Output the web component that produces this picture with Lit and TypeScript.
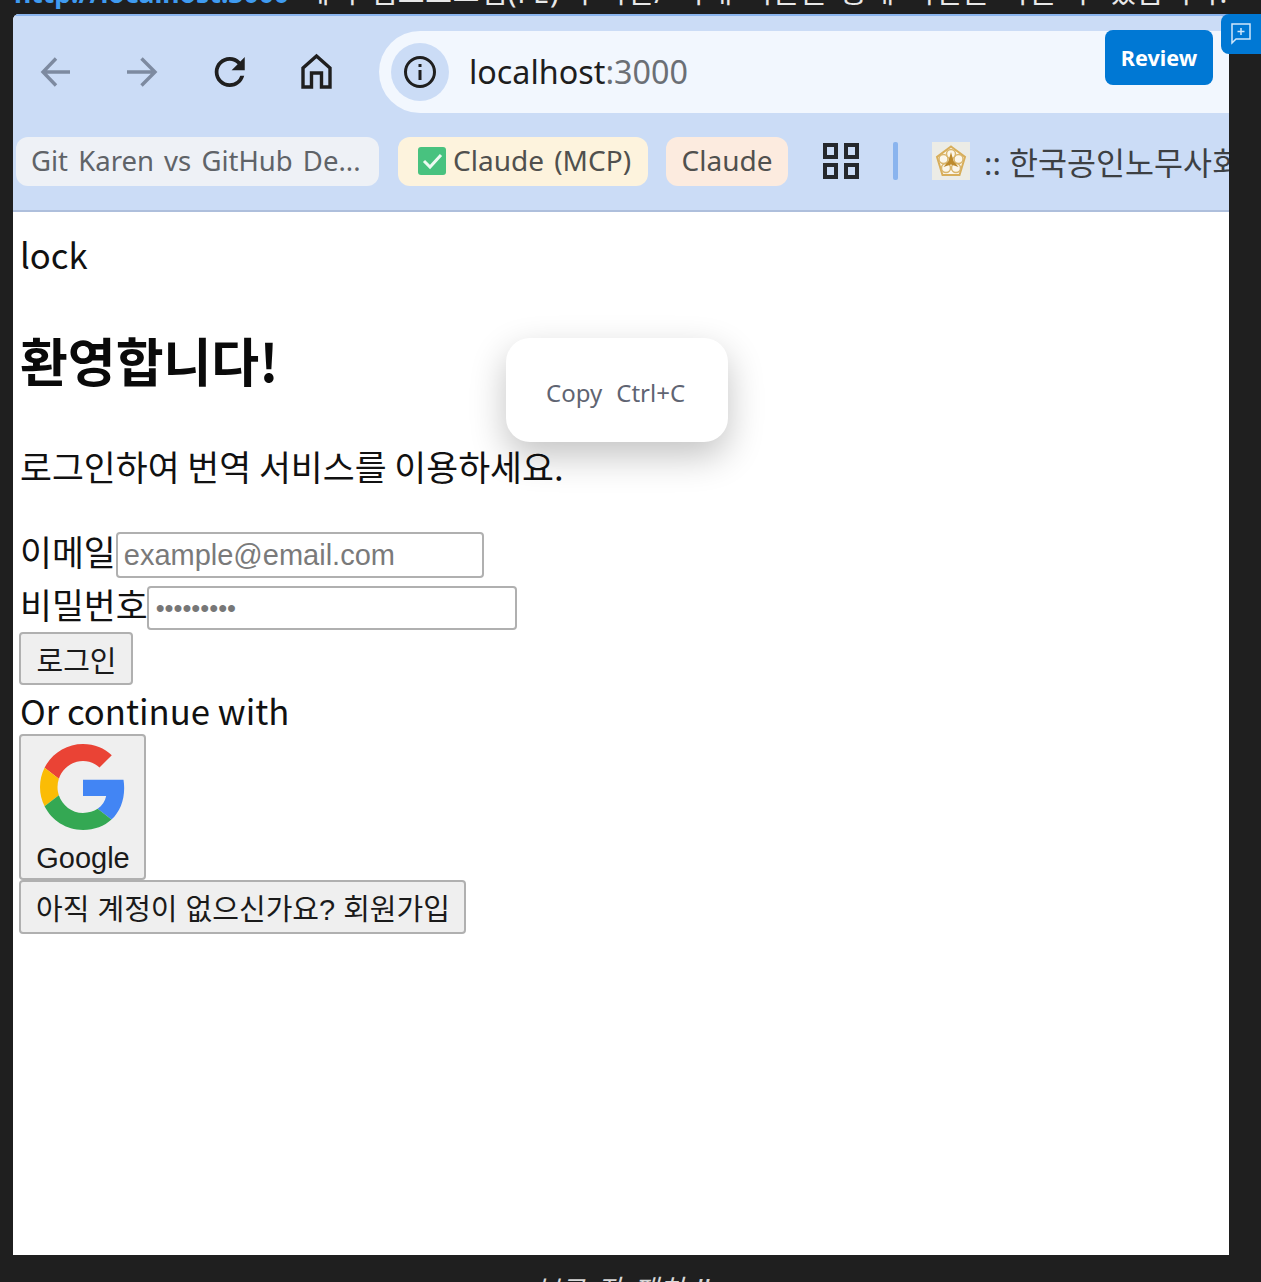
import { LitElement, html, css } from "lit";
import { customElement } from "lit/decorators.js";

@customElement("app-root")
export class AppRoot extends LitElement {
  static styles = css`
    :host {
      display: block;
      position: relative;
      width: 1261px;
      height: 1282px;
      overflow: hidden;
      background: #1f1f1f;
      font-family: "Noto Sans", "Noto Sans CJK KR", sans-serif;
      color: #111;
    }
    .caption {
      height: 14px;
      overflow: hidden;
      padding-left: 14px;
      white-space: nowrap;
      color: #e8e8e8;
      font-size: 29px;
      line-height: 30px;
      word-spacing: 4px;
      letter-spacing: 0.8px;
    }
    .caption span { display: block; margin-top: -23px; }
    .caption b { color: #3f9bf0; font-weight: 700; font-size: 26.500px; margin-right: 14px; word-spacing: 0; letter-spacing: 0; }
    .window {
      width: 1216px;
      margin-left: 13px;
      height: 1241px;
      background: #fff;
      display: flex;
      flex-direction: column;
      overflow: hidden;
      border-radius: 6px 0 0 0;
    }
    .chrome {
      height: 198px;
      flex: none;
      box-sizing: border-box;
      background: #cbdcf6;
      border-top: 2px solid #8ab4ee;
      border-bottom: 2px solid #aebfdc;
      padding-top: 15px;
    }
    .nav { display: flex; align-items: center; height: 82px; }
    .nav svg { flex: none; display: block; }
    .navbtns { display: flex; align-items: center; width: 366px; flex: none; padding-left: 23px; gap: 47px; box-sizing: border-box; }
    .addr {
      flex: 1;
      height: 82px;
      box-sizing: border-box;
      background: #f2f7fe;
      border-radius: 41px 0 0 41px;
      display: flex;
      align-items: center;
      padding-left: 12px;
      font-size: 32.300px;
      color: #1e1e1e;
    }
    .url { padding-bottom: 2px; }
    .info {
      width: 58px; height: 58px; border-radius: 50%;
      background: #cbdcf6;
      display: flex; align-items: center; justify-content: center;
      margin-right: 20px;
    }
    .addr .port { color: #6b6f75; }
    .bookmarks {
      display: flex; align-items: center;
      height: 50px;
      margin-top: 23px;
      padding-left: 3px;
      font-size: 27.500px;
      white-space: nowrap;
      color: #5f6368;
      overflow: hidden;
    }
    .chip {
      height: 49px; box-sizing: border-box;
      border-radius: 12px;
      display: flex; align-items: center;
      padding: 0 14px 2px;
      flex: none;
    }
    .c1 { background: #eef1f6; width: 363px; padding-left: 15px; margin-right: 19px; word-spacing: 3px; }
    .c2 { background: #fdf3dd; width: 250px; padding: 0 0 2px 19px; margin-right: 18px; color: #50504e; word-spacing: 3px; font-size: 28px; }
    .c3 { background: #fcebdf; width: 122px; margin-right: 35px; color: #50504e; justify-content: center; padding: 0 0 2px; font-size: 28px; }
    .check { width: 30px; height: 30px; margin-right: 6px; margin-top: 2px; flex: none; display: block; }
    .grid { flex: none; display: block; }
    .sep { width: 5px; height: 38px; background: #8ab4ee; border-radius: 2px; margin: 0 34px 0 34px; flex: none; }
    .emblem { width: 38px; height: 38px; margin-right: 14px; flex: none; display: block; }
    .korg { color: #3d4043; font-size: 31.500px; }
    .page {
      flex: 1;
      padding: 20px 0 0 6px;
      font-family: "Noto Sans CJK KR", "Noto Sans", sans-serif;
      font-size: 34.700px;
      color: #111;
    }
    .lock { padding-left: 1px; height: 48px; line-height: 44px; }
    h1 {
      margin: 0; padding-left: 1px;
      font-size: 52px; line-height: 70px; font-weight: 700;
      color: #0a0a0a;
      margin-top: 45px;
    }
    .sub { margin: 48px 0 0; font-size: 34.700px; padding-left: 1px; line-height: 46px; height: 46px; }
    .row { display: flex; align-items: center; padding-left: 1px; line-height: 46px; }
    .label { padding-bottom: 9px; }
    .row1 { margin-top: 43px; height: 46px; }
    .row2 { margin-top: 8px; height: 44px; }
    input {
      box-sizing: border-box;
      border: 2px solid #b0b0b0;
      border-radius: 4px;
      background: #fff;
      font-family: "Liberation Sans", sans-serif;
      font-size: 29px;
      padding: 0 6px;
      height: 100%;
      outline: none;
      margin: 0;
      color: #777;
    }
    input::placeholder { color: #7a7a7a; }
    .row1 input { width: 368px; }
    .row2 input { width: 370px; margin-left: -1px; font-size: 25.500px; padding-left: 7px; }
    button {
      display: block;
      box-sizing: border-box;
      border: 2px solid #b0b0b0;
      border-radius: 4px;
      background: #efefef;
      color: #1a1a1a;
      font-family: "Liberation Sans", "Noto Sans CJK KR", sans-serif;
      font-size: 29px;
      padding: 0 0 0 1px;
      margin: 0;
    }
    .login { width: 114px; height: 53px; margin-top: 2px; }
    .or { padding-left: 1px; line-height: 50px; height: 49px; }
    .google { width: 127px; height: 146px; display: flex; flex-direction: column; align-items: center; padding-top: 7px; }
    .google svg { display: block; width: 86px; height: 88px; margin-bottom: 11px; }
    .signup { width: 447px; height: 54px; }
    .menu {
      position: absolute;
      left: 506px; top: 338px;
      width: 222px; height: 104px;
      background: #fff;
      border-radius: 24px;
      box-shadow: 0 14px 36px rgba(0,0,0,.24);
      display: flex; align-items: center;
      gap: 14px;
      font-size: 24px;
      color: #5f6472;
      padding: 5px 0 0 40px;
      box-sizing: border-box;
    }
    .review {
      position: absolute;
      left: 1105px; top: 30px;
      width: 108px; height: 55px;
      background: #0078d4;
      color: #fff;
      border-radius: 8px;
      display: flex; align-items: center; justify-content: center;
      font-weight: 700;
      font-size: 21.600px;
    }
    .fb {
      position: absolute;
      left: 1221px; top: 14px;
      width: 40px; height: 40px;
      background: #0078d4;
      border-radius: 8px 0 0 8px;
      display: flex; align-items: center; justify-content: center;
    }
    .footer {
      position: absolute;
      left: 535px; top: 1268px;
      font-size: 27px;
      font-style: italic;
      color: #d8d8d8;
      white-space: nowrap;
      word-spacing: 5px;
    }
  `;

  render() {
    return html`
      <div class="caption"><span><b>http://localhost:3000</b>에서 웹프로그램(FE) 구버전/ 아래 버튼을 통해 버전을 바꿀 수 있습니다.</span></div>
      <div class="window">
        <div class="chrome">
          <div class="nav">
            <div class="navbtns">
              <svg width="40" height="40" viewBox="0 0 40 40" fill="none" stroke="#7d8aa0" stroke-width="3.4"><path d="M34 20H7M20 6.500 7 20l13 13.500"/></svg>
              <svg width="40" height="40" viewBox="0 0 40 40" fill="none" stroke="#7d8aa0" stroke-width="3.4"><path d="M4 20h28M18.500 6.500 32 20 18.500 33.500"/></svg>
              <svg width="40" height="40" viewBox="1.500 1.300 21.300 21.300" fill="#1f1f1f"><path d="M17.650 6.350A7.958 7.958 0 0 0 12 4c-4.420 0-7.990 3.580-7.990 8s3.570 8 7.990 8c3.730 0 6.840-2.550 7.730-6h-2.080A5.990 5.990 0 0 1 12 18c-3.310 0-6-2.690-6-6s2.690-6 6-6c1.660 0 3.140.690 4.220 1.780L13 11h7V4l-2.350 2.350z"/></svg>
              <svg width="40" height="40" viewBox="0 0 40 40" fill="none" stroke="#1f1f1f" stroke-width="3.4"><path d="M6 35V16L19.500 4 33 16v19h-8.500V21h-10v14z"/></svg>
            </div>
            <div class="addr">
              <div class="info">
                <svg width="34" height="34" viewBox="0 0 34 34" fill="none" stroke="#1f1f1f" stroke-width="3"><circle cx="17" cy="17" r="14.500"/><path d="M17 15v10"/><path d="M17 9v3"/></svg>
              </div>
              <span class="url">localhost<span class="port">:3000</span></span>
            </div>
          </div>
          <div class="bookmarks">
            <div class="chip c1">Git Karen vs GitHub De...</div>
            <div class="chip c2">
              <svg class="check" viewBox="0 0 30 30"><rect x="1" y="1" width="28" height="28" rx="3" fill="#48c27f"/><path d="M7 15l6 6 11-12" fill="none" stroke="#eefaf2" stroke-width="3"/></svg>
              Claude (MCP)
            </div>
            <div class="chip c3">Claude</div>
            <svg class="grid" width="36" height="36" viewBox="0 0 36 36" fill="none" stroke="#25282d" stroke-width="4"><rect x="2" y="2" width="11" height="12"/><rect x="23" y="2" width="11" height="12"/><rect x="2" y="22" width="11" height="12"/><rect x="23" y="22" width="11" height="12"/></svg>
            <div class="sep"></div>
            <svg class="emblem" viewBox="0 0 38 38">
              <rect width="38" height="38" fill="#ecece6"/>
              <path d="M19 4.500 33 15l-5.500 18h-17L5 15z" fill="#fbf6ea" stroke="#d8ae5a" stroke-width="2"/>
              <g fill="none" stroke="#d9b56c" stroke-width="1.500">
                <circle cx="19" cy="12" r="4.500"/><circle cx="11.500" cy="17" r="4.500"/><circle cx="26.500" cy="17" r="4.500"/><circle cx="14" cy="26" r="4.500"/><circle cx="24" cy="26" r="4.500"/>
              </g>
              <path d="M19 10l2.500 9 5 6-7.500-2.500L11.500 25l5-6z" fill="#bd8a2d"/>
            </svg>
            <span class="korg">:: 한국공인노무사회</span>
          </div>
        </div>
        <div class="page">
          <div class="lock">lock</div>
          <h1>환영합니다!</h1>
          <p class="sub">로그인하여 번역 서비스를 이용하세요.</p>
          <div class="row row1"><span class="label">이메일</span><input placeholder="example@email.com" /></div>
          <div class="row row2"><span class="label">비밀번호</span><input type="password" value="password1" /></div>
          <button class="login">로그인</button>
          <div class="or">Or continue with</div>
          <button class="google">
            <svg viewBox="0 0 48 48">
              <path fill="#EA4335" d="M24 9.500c3.540 0 6.710 1.220 9.210 3.600l6.850-6.850C35.900 2.380 30.470 0 24 0 14.620 0 6.510 5.380 2.560 13.220l7.980 6.190C12.430 13.720 17.740 9.500 24 9.500z"/>
              <path fill="#4285F4" d="M46.980 24.550c0-1.570-.15-3.090-.38-4.550H24v9.020h12.940c-.58 2.960-2.260 5.480-4.780 7.180l7.730 6c4.510-4.180 7.090-10.360 7.090-17.650z"/>
              <path fill="#FBBC05" d="M10.530 28.590c-.48-1.450-.76-2.990-.76-4.590s.27-3.140.76-4.590l-7.980-6.190C.92 16.460 0 20.120 0 24c0 3.880.92 7.540 2.560 10.780l7.970-6.190z"/>
              <path fill="#34A853" d="M24 48c6.480 0 11.930-2.130 15.890-5.810l-7.730-6c-2.150 1.450-4.920 2.300-8.160 2.300-6.260 0-11.570-4.220-13.470-9.910l-7.980 6.190C6.510 42.620 14.620 48 24 48z"/>
            </svg>
            Google
          </button>
          <button class="signup">아직 계정이 없으신가요? 회원가입</button>
        </div>
      </div>
      <div class="menu"><span>Copy</span><span>Ctrl+C</span></div>
      <div class="review">Review</div>
      <div class="fb">
        <svg width="24" height="24" viewBox="0 0 24 24" fill="none" stroke="#cfe6fa" stroke-width="1.500"><path d="M3 2h18v15H7l-4 4z"/><path d="M12 6v7M8.500 9.500h7"/></svg>
      </div>
      <div class="footer">보고 자 패치 !!</div>
    `;
  }
}
